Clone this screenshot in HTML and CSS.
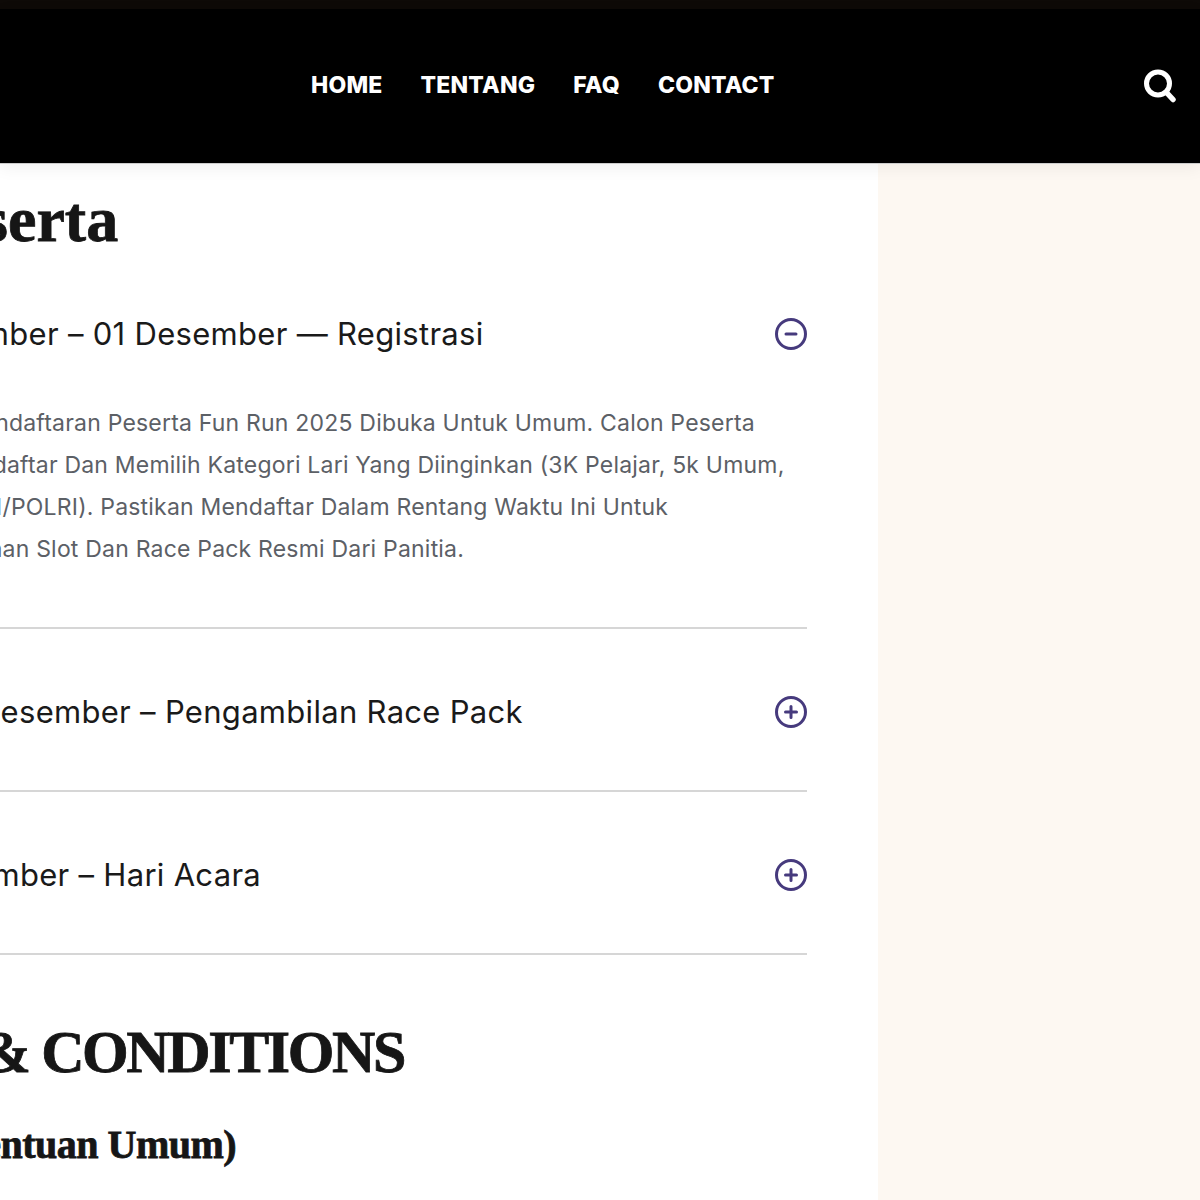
FILE: index.html
```html
<!DOCTYPE html>
<html lang="id">
<head>
  <meta charset="UTF-8">
  <title>Fun Run 2025</title>
  <link rel="stylesheet" href="styles.css">
</head>
<body>

  <div class="topbar"></div>

  <!-- Header -->
  <header class="header">
    <nav class="menu">
      <a href="#">HOME</a>
      <a href="#">TENTANG</a>
      <a href="#">FAQ</a>
      <a href="#">CONTACT</a>
    </nav>
    <a class="cari" href="#" aria-label="Cari">
      <svg viewBox="0 0 32 34" width="32" height="34">
        <circle cx="14" cy="14.5" r="11.5" fill="none" stroke="#fff" stroke-width="5"/>
        <path d="M22.5 23.5 L29 30.5" stroke="#fff" stroke-width="5.5" stroke-linecap="round"/>
      </svg>
    </a>
  </header>

  <div class="halaman">
    <main class="konten">
      <div class="isi">
        <h2 class="judul">Jadwal Peserta</h2>

        <!-- Accordion -->
        <section class="item terbuka">
          <div class="item-kepala">
            <h3 class="item-judul">Selasa, 23 November – 01 Desember — Registrasi</h3>
            <svg class="ikon" viewBox="0 0 32 32" width="32" height="32">
              <circle cx="16" cy="16" r="14.5" fill="none" stroke="#463a7d" stroke-width="3"/>
              <path d="M11 16 H21" stroke="#463a7d" stroke-width="3" stroke-linecap="round"/>
            </svg>
          </div>
          <p class="item-isi">
            Tahapan Awal Masa Pendaftaran Peserta Fun Run 2025 Dibuka Untuk Umum. Calon Peserta<br>
            Diharapkan Untuk Mendaftar Dan Memilih Kategori Lari Yang Diinginkan (3K Pelajar, 5k Umum,<br>
            Sampai 10K Khusus TNI/POLRI). Pastikan Mendaftar Dalam Rentang Waktu Ini Untuk<br>
            Memperoleh Ketersediaan Slot Dan Race Pack Resmi Dari Panitia.
          </p>
        </section>

        <section class="item">
          <div class="item-kepala">
            <h3 class="item-judul">Selasa, 02 – 03 Desember – Pengambilan Race Pack</h3>
            <svg class="ikon" viewBox="0 0 32 32" width="32" height="32">
              <circle cx="16" cy="16" r="14.5" fill="none" stroke="#463a7d" stroke-width="3"/>
              <path d="M10.5 16 H21.5 M16 10.5 V21.5" stroke="#463a7d" stroke-width="3" stroke-linecap="round"/>
            </svg>
          </div>
        </section>

        <section class="item">
          <div class="item-kepala">
            <h3 class="item-judul">Minggu, 07 Desember – Hari Acara</h3>
            <svg class="ikon" viewBox="0 0 32 32" width="32" height="32">
              <circle cx="16" cy="16" r="14.5" fill="none" stroke="#463a7d" stroke-width="3"/>
              <path d="M10.5 16 H21.5 M16 10.5 V21.5" stroke="#463a7d" stroke-width="3" stroke-linecap="round"/>
            </svg>
          </div>
        </section>

        <h2 class="judul-besar">TERMS &amp; CONDITIONS</h2>
        <h3 class="sub-judul">General (Ketentuan Umum)</h3>
      </div>
    </main>
    <aside class="samping"></aside>
  </div>

</body>
</html>
```

FILE: styles.css
```css
* {
  box-sizing: border-box;
}

body {
  margin: 0;
  height: 1200px;
  overflow: hidden;
  font-family: 'Inter', sans-serif;
  background-color: #fff;
}

.topbar {
  height: 9px;
  background-color: #0e0a07;
}

.header {
  position: relative;
  z-index: 2;
  display: flex;
  align-items: center;
  height: 155px;
  padding: 0 24px 0 311px;
  background-color: #000;
  border-bottom: 1px solid #ccc;
  box-shadow: 0 4px 16px rgba(0, 0, 0, 0.06);
}

.menu {
  display: flex;
  gap: 38px;
  margin-top: -2px;
}

.menu a {
  color: #fff;
  font-size: 23px;
  font-weight: 800;
  letter-spacing: 0.2px;
  text-decoration: none;
}

.cari {
  display: flex;
  margin-left: auto;
}

.halaman {
  display: grid;
  grid-template-columns: 878px 1fr;
  height: 1036px;
}

.konten {
  overflow: hidden;
  background-color: #fff;
}

.isi {
  margin-left: -260px;
  padding-right: 71px;
}

.samping {
  background-color: #fdf8f2;
}

.judul {
  margin: 21px 0 0 -36px;
  font-family: 'Liberation Serif', serif;
  font-size: 64px;
  line-height: 70px;
  font-weight: 700;
  color: #161616;
  -webkit-text-stroke: 0.8px #161616;
  white-space: nowrap;
}

.item {
  border-bottom: 2px solid #d6d6d6;
}

.item-kepala {
  display: flex;
  justify-content: space-between;
  align-items: center;
  padding: 63px 0 58px;
}

.item.terbuka .item-kepala {
  padding: 59px 0 0;
}

.item-judul {
  margin: 0;
  font-size: 31px;
  line-height: 40px;
  font-weight: 400;
  letter-spacing: 0.3px;
  color: #1a1a1a;
  white-space: nowrap;
}

.ikon {
  flex: none;
}

.item-isi {
  margin: 48px 0 57px;
  font-size: 23px;
  line-height: 42px;
  letter-spacing: 0.2px;
  color: #5c6066;
  white-space: nowrap;
}

.judul-besar {
  margin: 57px 0 0 27px;
  font-family: 'Liberation Serif', serif;
  font-size: 60px;
  line-height: 80px;
  font-weight: 700;
  letter-spacing: -2.4px;
  color: #161616;
  -webkit-text-stroke: 0.8px #161616;
  white-space: nowrap;
}

.sub-judul {
  margin: 28px 0 0 26px;
  font-family: 'Liberation Serif', serif;
  font-size: 40px;
  line-height: 50px;
  font-weight: 700;
  letter-spacing: -0.5px;
  color: #161616;
  -webkit-text-stroke: 0.8px #161616;
  white-space: nowrap;
}
```
